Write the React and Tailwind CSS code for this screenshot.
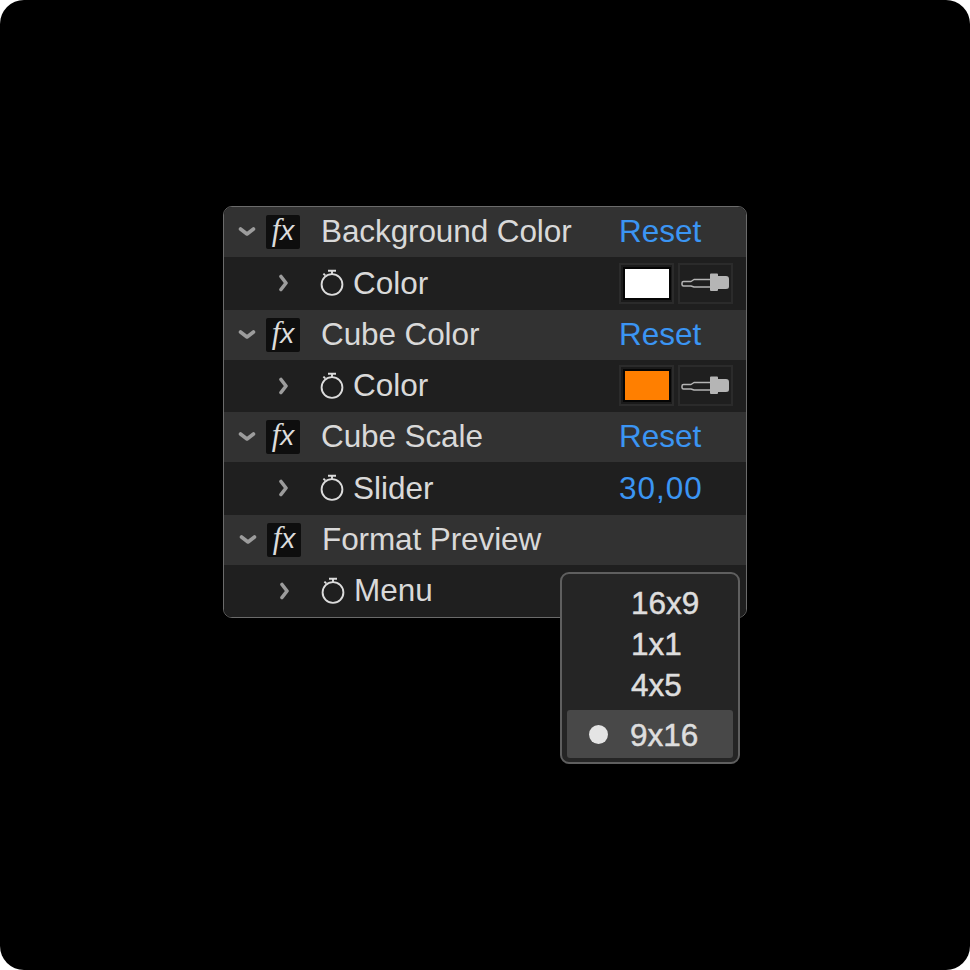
const FONT = "font-['Liberation_Sans',Arial,sans-serif]"

function ChevronDown() {
  return (
    <svg width="18" height="12" viewBox="0 0 18 12" fill="none">
      <path d="M2.5 3 L9 8 L15.5 3" stroke="#9c9c9c" strokeWidth="3.6" strokeLinecap="round" strokeLinejoin="round" />
    </svg>
  )
}

function ChevronRight() {
  return (
    <svg width="12" height="18" viewBox="0 0 12 18" fill="none">
      <path d="M3 2.5 L8 9 L3 15.5" stroke="#9c9c9c" strokeWidth="3.6" strokeLinecap="round" strokeLinejoin="round" />
    </svg>
  )
}

function Stopwatch() {
  return (
    <svg width="24" height="28" viewBox="0 0 24 28" fill="none" stroke="#dcdcdc" strokeWidth="1.9">
      <circle cx="12" cy="15.5" r="10.4" />
      <path d="M8 1.8 H16 M12 1.8 V5 M3.4 4.6 L5.2 6.4" />
    </svg>
  )
}

function Dropper() {
  return (
    <svg width="50" height="20" viewBox="0 0 50 20" fill="none" className="-ml-[2px]">
      <path d="M2 10 Q2 8.5 3.5 8.5 H11 L14 6.5 H31 V14 H14 L11 13 H3.5 Q2 13 2 11.5 Z" stroke="#b5b5b5" strokeWidth="1.5" strokeLinejoin="round" />
      <path d="M30 1.5 Q30 0.5 31 0.5 H37 Q38 0.5 38 1.5 V3 H46 Q49 3 49 6 V13.5 Q49 16 46 16 H38 V17 Q38 18 37 18 H31 Q30 18 30 17 Z" fill="#b5b5b5" />
    </svg>
  )
}

function FxBadge() {
  return (
    <div className="flex h-[34px] w-[34px] items-center justify-center rounded-[2px] bg-[#0e0e0e]">
      <span className="pb-[5px] text-[#dcdcdc] italic leading-none">
        <span className="font-['Liberation_Serif',serif] text-[31px]">f</span>
        <span className="text-[28px]">x</span>
      </span>
    </div>
  )
}

function HeaderRow({ title, reset, shift }) {
  return (
    <div className={`flex h-[50.25px] items-center bg-[#323232] ${shift ? 'pl-[15px]' : 'pl-[14px]'}`}>
      <ChevronDown />
      <div className="ml-[10px]"><FxBadge /></div>
      <span className="ml-[21px] text-[31.5px] leading-none tracking-[-0.1px] text-[#d9d9d9]">{title}</span>
      {reset && <span className="absolute left-[396px] text-[31.5px] leading-none text-[#3b95f3]">Reset</span>}
    </div>
  )
}

function ValueRow({ label, swatch, value, shift }) {
  return (
    <div className={`relative flex h-[52.25px] items-center bg-[#1f1f1f] ${shift ? 'pl-[55px]' : 'pl-[54px]'}`}>
      <ChevronRight />
      <div className="ml-[30px] mr-[9px] flex"><Stopwatch /></div>
      <span className="text-[31.5px] leading-none text-[#d9d9d9]">{label}</span>
      {swatch && (
        <div className="absolute left-[395px] flex gap-[4px]">
          <div className="flex h-[41px] w-[55px] items-center justify-center border-2 border-[#2b2b2b] bg-[#1a1a1a]">
            <div className="border-2 border-[#050505]">
              <div className="h-[29px] w-[44px]" style={{ background: swatch }} />
            </div>
          </div>
          <div className="flex h-[41px] w-[55px] items-center justify-center border-2 border-[#2b2b2b]">
            <Dropper />
          </div>
        </div>
      )}
      {value && <span className="absolute left-[395px] text-[31.5px] leading-none tracking-[1px] text-[#3b95f3]">{value}</span>}
    </div>
  )
}

function PopupMenu() {
  const items = ['16x9', '1x1', '4x5']
  return (
    <div className="absolute left-[337px] top-[366px] w-[180px] rounded-[9px] border-2 border-[#5f5f5f] bg-[#252525] px-[5px] pt-[9px] pb-[4px]">
      {items.map(item => (
        <div key={item} className="flex h-[41px] items-center pl-[64px] text-[31.5px] text-[#dedede] [-webkit-text-stroke:0.5px_#dedede]">
          {item}
        </div>
      ))}
      <div className="mt-[4px] flex h-[48px] items-center rounded-[3px] bg-[#484848] pl-[22px] text-[31.5px] text-[#dedede] [-webkit-text-stroke:0.5px_#dedede]">
        <div className="mr-[22px] h-[19px] w-[19px] rounded-full bg-[#e4e4e4]" />
        <span className="pt-[3px]">9x16</span>
      </div>
    </div>
  )
}

export default function App() {
  const sections = [
    { title: 'Background Color', reset: true, label: 'Color', swatch: '#ffffff' },
    { title: 'Cube Color', reset: true, label: 'Color', swatch: '#ff7f00' },
    { title: 'Cube Scale', reset: true, label: 'Slider', value: '30,00' },
    { title: 'Format Preview', label: 'Menu', shift: true },
  ]

  return (
    <div className={`h-[970px] w-[970px] bg-white ${FONT}`}>
      <div className="flex h-full w-full items-start justify-center rounded-[24px] bg-black pt-[206px]">
        <div className="relative w-[524px]">
          <div className="overflow-hidden rounded-[9px] border border-[#6b6b6b]">
            {sections.map(s => (
              <div key={s.title}>
                <HeaderRow title={s.title} reset={s.reset} shift={s.shift} />
                <ValueRow label={s.label} swatch={s.swatch} value={s.value} shift={s.shift} />
              </div>
            ))}
          </div>
          <PopupMenu />
        </div>
      </div>
    </div>
  )
}
